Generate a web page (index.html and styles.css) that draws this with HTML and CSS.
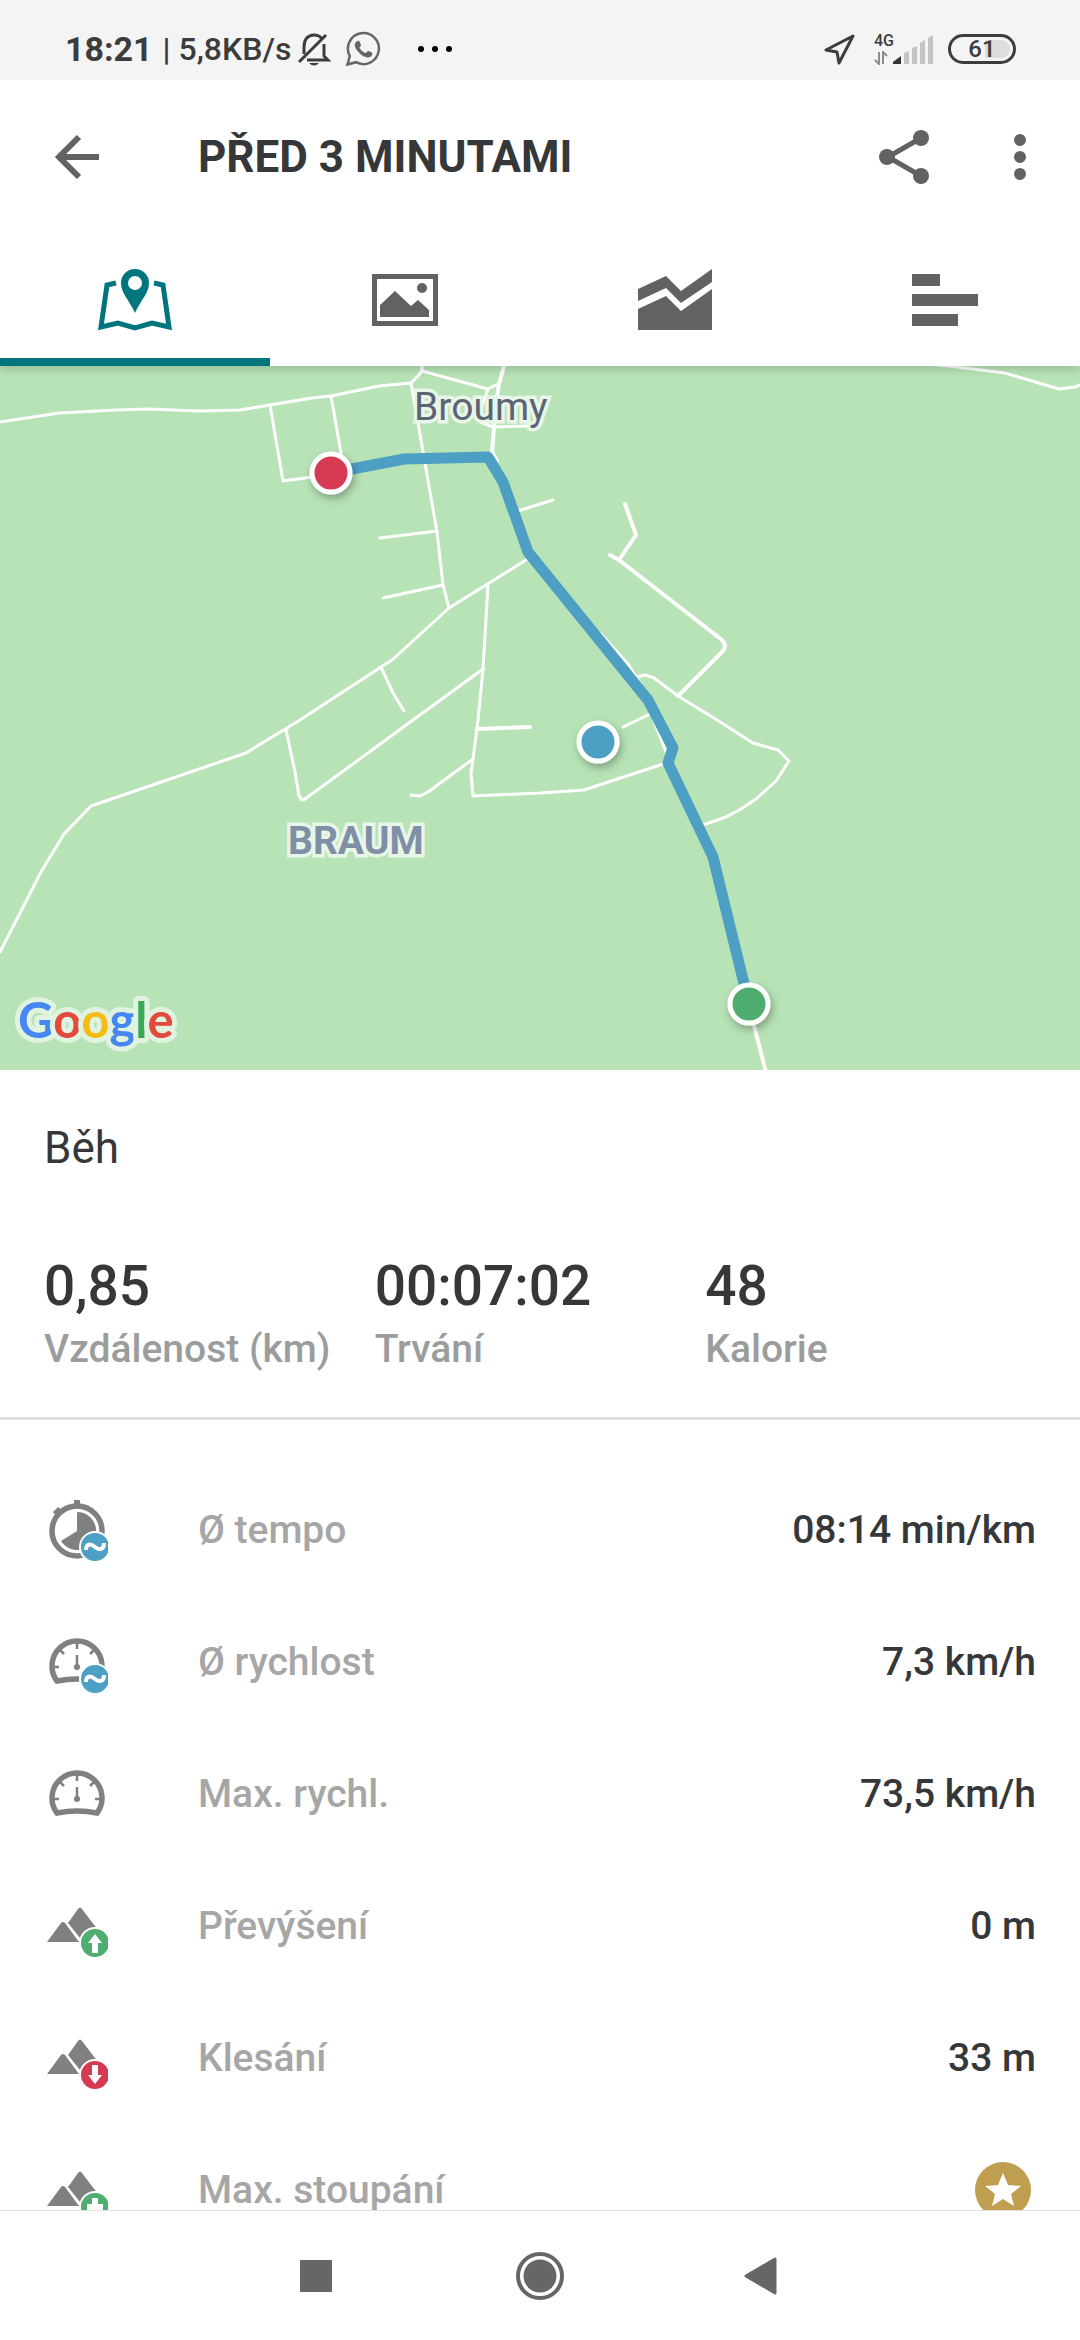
FILE: index.html
```html
<!DOCTYPE html>
<html lang="cs">
<head>
    <meta charset="UTF-8">
    <meta name="viewport" content="width=device-width, initial-scale=1.0">
    <title>Před 3 minutami</title>
    <link rel="stylesheet" href="styles.css">
</head>
<body>
    <div class="status-bar">
        <div class="status-left">
            <span class="clock">18:21</span>
            <span class="net-speed">| 5,8KB/s</span>
            <svg class="bell" width="34" height="34" viewBox="0 0 34 34" fill="none" stroke="#3c3c3c" stroke-width="3">
                <path d="M7 22V15c0-8 4-12 10-12 4 0 6 1 8 4M27 12v12l4 4H10M2 30 29 3"/>
                <path d="M12 31h10q-5 5-10 0z" fill="#3c3c3c" stroke="none"/>
            </svg>
            <svg width="36" height="36" viewBox="0 0 36 36">
                <path d="M2.500 33.500 4.800 25A15.500 15.500 0 1 1 11 31.200z" fill="none" stroke="#666" stroke-width="2.500"/>
                <path d="M11.500 10.500c1-1 2.500-1 3 0l1.500 3.500c0 1-1.500 2-1.500 2.500 1 2.500 3 4.500 6 5.500 1 0 2-2.500 3-2l3.500 1.500c1 1 0 3-1 4-3 2-7 .5-10-2-3-2.500-5-5-6-8-.5-2 0-4 1.500-5z" fill="#666"/>
            </svg>
            <svg class="more-dots" width="36" height="8" viewBox="0 0 36 8">
                <circle cx="4" cy="4" r="3"/><circle cx="18" cy="4" r="3"/><circle cx="32" cy="4" r="3"/>
            </svg>
        </div>
        <div class="status-right">
            <svg width="32" height="32" viewBox="0 0 32 32" fill="none" stroke="#3c3c3c" stroke-width="3" stroke-linejoin="round">
                <path d="M29 3 2 17l11 2 2 11z"/>
            </svg>
            <div class="signal">
                <div class="signal-type">
                    <span>4G</span>
                    <svg width="14" height="14" viewBox="0 0 14 14" stroke="#8c8c8c" stroke-width="2" fill="none">
                        <path d="M5 1v12L1 9M9 13V1l4 4"/>
                    </svg>
                </div>
                <svg width="42" height="32" viewBox="0 0 42 32" fill="#c4c4c4">
                    <path d="M1 31v-2l8-6v8z" fill="#333"/>
                    <path d="M12 31V20l5-2v13zM20 31V15l5-2v18zM28 31V10l5-3v24zM36 31V5l5-3v29z"/>
                </svg>
            </div>
            <div class="battery">61</div>
        </div>
    </div>

    <header class="app-header">
        <div class="toolbar">
            <button class="icon-btn back" aria-label="Zpět">
                <svg width="46" height="46" viewBox="0 0 46 46" fill="none" stroke="#616362" stroke-width="6">
                    <path d="M45 23H5M25 3 5 23l20 20"/>
                </svg>
            </button>
            <h1>PŘED 3 MINUTAMI</h1>
            <button class="icon-btn share" aria-label="Sdílet">
                <svg width="52" height="56" viewBox="0 0 52 56" fill="#616362">
                    <path d="M43 9 10 28l33 19" fill="none" stroke="#616362" stroke-width="5"/>
                    <circle cx="43" cy="9" r="8"/><circle cx="9" cy="28" r="8"/><circle cx="43" cy="47" r="8"/>
                </svg>
            </button>
            <button class="icon-btn menu" aria-label="Další možnosti">
                <svg width="12" height="48" viewBox="0 0 12 48" fill="#616362">
                    <circle cx="6" cy="7" r="6"/><circle cx="6" cy="24" r="6"/><circle cx="6" cy="41" r="6"/>
                </svg>
            </button>
        </div>
        <nav class="tabs">
            <button class="tab active" aria-label="Mapa">
                <svg width="74" height="64" viewBox="0 0 74 64">
                    <path d="M18 15 9 17 3 59l17-4 17 5 17-5 17 4-6-42-9-2" fill="none" stroke="#00757d" stroke-width="5"/>
                    <path d="M37 1a14 14 0 0 0-14 14c0 10 7 15 14 30 7-15 14-20 14-30A14 14 0 0 0 37 1zm0 7a7 7 0 1 1 0 14 7 7 0 0 1 0-14z" fill="#00757d"/>
                </svg>
            </button>
            <button class="tab" aria-label="Fotky">
                <svg width="66" height="52" viewBox="0 0 66 52" fill="#616362">
                    <path d="M0 0h66v52H0zM5 5v42h56V5z" fill-rule="evenodd"/>
                    <path d="M8 43V31l15-14 16 15 7-6 11 10v7z"/>
                    <circle cx="50" cy="14" r="5"/>
                </svg>
            </button>
            <button class="tab" aria-label="Grafy">
                <svg width="74" height="64" viewBox="0 0 74 64" fill="#616362">
                    <path d="M0 21 28 8l15 15L74 1v13L43 35 28 20 0 33z"/>
                    <path d="M0 41 28 28l15 15 31-22v41H0z"/>
                </svg>
            </button>
            <button class="tab" aria-label="Mezičasy">
                <svg width="66" height="52" viewBox="0 0 66 52" fill="#616362">
                    <path d="M0 0h28v12H0zM0 20h66v12H0zM0 40h46v12H0z"/>
                </svg>
            </button>
        </nav>
    </header>

    <main class="content">
        <svg class="map" viewBox="0 0 1080 704" role="img" aria-label="Mapa trasy">
            <defs>
                <filter id="pinShadow" x="-50%" y="-50%" width="200%" height="200%">
                    <feDropShadow dx="2" dy="4" stdDeviation="4" flood-opacity="0.3"/>
                </filter>
            </defs>
            <rect width="1080" height="704" fill="#b7e3b6"/>

            <g class="roads">
                <path d="M0 56 59 47 117 44 148 43 200 45 240 44 270 39 312 32 331 30 379 20 411 17 418 10 422 5V-2"/>
                <path d="M422 5 488 23 498 18M488 23 482 40 480 56 493 61 527 60"/>
                <path d="M411 17 418 57 437 166 443 219 449 242"/>
                <path d="M270 39 283 115 320 110M331 30 341 87M380 172 437 165M383 232 443 219M518 145 553 134"/>
                <path d="M526 194 449 242 392 294 381 301 300 354 246 387 91 440 64 468 41 506 0 586"/>
                <path d="M381 301 393 327 404 345"/>
                <path d="M488 219 483 303 478 354 473 393 471 407 473 430 540 427 584 424 663 398"/>
                <path d="M483 303 413 354 305 433 302 434 299 430 295 406 286 364"/>
                <path d="M473 393 428 426 420 430 411 429"/>
                <path d="M637 311 645 309 654 312 678 330 717 354 753 377 778 384 789 395 776 415 756 433 741 443 726 451 703 459"/>
                <path d="M599 266 628 298 642 320M623 361 650 348M648 340 666 386"/>
                <path d="M930-2 957 1 1005 7 1059 23 1075 21 1082 18"/>
            </g>
            <g class="roads wide">
                <path d="M504 0 499 18 496 37 492 86 497 95M477 363 530 361M753 656 766 706"/>
                <path d="M625 138 636 169 619 194M610 189 619 194 722 274Q728 280 722 286L678 330"/>
            </g>

            <text class="place town" x="414" y="54">Broumy</text>
            <text class="place district" x="288" y="488">BRAUM</text>

            <path class="route" d="M331 107 404 93 488 91 503 116 528 186 648 334 673 382 668 397 713 491 749 638"/>

            <g class="pins" filter="url(#pinShadow)">
                <circle cx="331" cy="107" r="19" fill="#d63a52"/>
                <circle cx="598" cy="376" r="19" fill="#4d9fc4"/>
                <circle cx="749" cy="638" r="19" fill="#50ad70"/>
            </g>

            <text class="brand" x="18" y="672"><tspan fill="#4688f1">G</tspan><tspan fill="#e24a3b">o</tspan><tspan fill="#f6bc13">o</tspan><tspan fill="#4688f1">g</tspan><tspan fill="#3aa757">l</tspan><tspan fill="#e24a3b">e</tspan></text>
        </svg>

        <section class="summary">
            <h2>Běh</h2>
            <dl class="totals">
                <div><dd>0,85</dd><dt>Vzdálenost (km)</dt></div>
                <div><dd>00:07:02</dd><dt>Trvání</dt></div>
                <div><dd>48</dd><dt>Kalorie</dt></div>
            </dl>
        </section>

        <dl class="stats">
            <div class="stat">
                <svg width="64" height="64" viewBox="0 0 64 64" fill="#808080">
                    <circle cx="33" cy="33" r="25" fill="none" stroke="#808080" stroke-width="5.500"/>
                    <path d="M30 2h6v6h-6zM9 14l5-5 4 3-6 6z"/>
                    <path d="M33 33V14a19 19 0 1 1-16 29z"/>
                    <circle cx="51" cy="49" r="16" fill="#fff"/>
                    <circle cx="51" cy="49" r="14" fill="#4d9fc4"/>
                    <path d="M42 52c0-6 4-7 9-3s9 2 9-4" fill="none" stroke="#fff" stroke-width="4"/>
                </svg>
                <dt>Ø tempo</dt>
                <dd>08:14 min/km</dd>
            </div>
            <div class="stat">
                <svg width="64" height="64" viewBox="0 0 64 64" fill="#808080">
                    <path d="M13 51A25 25 0 1 1 53 51Q33 47 13 51z" fill="none" stroke="#808080" stroke-width="5.500"/>
                    <path d="M33 13v6M10 37h5M51 37h5M16 20l4 4M50 20l-4 4M33 25v12" stroke="#808080" stroke-width="2.500"/>
                    <circle cx="33" cy="37" r="3"/>
                    <circle cx="51" cy="49" r="16" fill="#fff"/>
                    <circle cx="51" cy="49" r="14" fill="#4d9fc4"/>
                    <path d="M42 52c0-6 4-7 9-3s9 2 9-4" fill="none" stroke="#fff" stroke-width="4"/>
                </svg>
                <dt>Ø rychlost</dt>
                <dd>7,3 km/h</dd>
            </div>
            <div class="stat">
                <svg width="64" height="64" viewBox="0 0 64 64" fill="#808080">
                    <path d="M13 51A25 25 0 1 1 53 51Q33 47 13 51z" fill="none" stroke="#808080" stroke-width="5.500"/>
                    <path d="M33 13v6M10 37h5M51 37h5M16 20l4 4M50 20l-4 4M33 25v12" stroke="#808080" stroke-width="2.500"/>
                    <circle cx="33" cy="37" r="3"/>
                </svg>
                <dt>Max. rychl.</dt>
                <dd>73,5 km/h</dd>
            </div>
            <div class="stat">
                <svg width="64" height="64" viewBox="0 0 64 64" fill="#808080">
                    <path d="M3 48 17 29q2-2 4 0L35 48zM24 29 34 15q2-3 4 0L54 36 36 44z"/>
                    <circle cx="51" cy="49" r="16" fill="#fff"/>
                    <circle cx="51" cy="49" r="14" fill="#50ad70"/>
                    <path d="M51 40l7 9h-4v10h-6V49h-4z" fill="#fff"/>
                </svg>
                <dt>Převýšení</dt>
                <dd>0 m</dd>
            </div>
            <div class="stat">
                <svg width="64" height="64" viewBox="0 0 64 64" fill="#808080">
                    <path d="M3 48 17 29q2-2 4 0L35 48zM24 29 34 15q2-3 4 0L54 36 36 44z"/>
                    <circle cx="51" cy="49" r="16" fill="#fff"/>
                    <circle cx="51" cy="49" r="14" fill="#d63a52"/>
                    <path d="M51 58l7-9h-4V39h-6v10h-4z" fill="#fff"/>
                </svg>
                <dt>Klesání</dt>
                <dd>33 m</dd>
            </div>
            <div class="stat">
                <svg width="64" height="64" viewBox="0 0 64 64" fill="#808080">
                    <path d="M3 48 17 29q2-2 4 0L35 48zM24 29 34 15q2-3 4 0L54 36 36 44z"/>
                    <circle cx="51" cy="49" r="16" fill="#fff"/>
                    <circle cx="51" cy="49" r="14" fill="#50ad70"/>
                    <path d="M48 40h6v6h5v6h-5v6h-6v-6h-5v-6h5z" fill="#fff"/>
                </svg>
                <dt>Max. stoupání</dt>
                <dd>
                    <svg width="66" height="66" viewBox="0 0 66 66">
                        <circle cx="33" cy="33" r="28" fill="#bf9e4f"/>
                        <path d="M33 16l5 12 13 1-10 8 3 12-11-7-11 7 3-12-10-8 13-1z" fill="#fff"/>
                    </svg>
                </dd>
            </div>
        </dl>
    </main>

    <nav class="system-nav">
        <button aria-label="Poslední aplikace">
            <svg width="48" height="48" viewBox="0 0 48 48" fill="#666"><rect x="8" y="8" width="32" height="32" rx="1"/></svg>
        </button>
        <button aria-label="Domů">
            <svg width="50" height="50" viewBox="0 0 50 50" fill="#666">
                <circle cx="25" cy="25" r="22" fill="none" stroke="#666" stroke-width="4"/>
                <circle cx="25" cy="25" r="16.500"/>
            </svg>
        </button>
        <button aria-label="Zpět">
            <svg width="48" height="48" viewBox="0 0 48 48" fill="#666" stroke="#666" stroke-width="3" stroke-linejoin="round">
                <path d="M35 7v34L6 24z"/>
            </svg>
        </button>
    </nav>
</body>
</html>
```

FILE: styles.css
```css
* {
    box-sizing: border-box;
}
body {
    margin: 0;
    height: 100vh;
    display: flex;
    flex-direction: column;
    font-family: Roboto, sans-serif;
    font-weight: 500;
    color: #353739;
    background: #fff;
}
h1, h2, dl, dt, dd {
    margin: 0;
}
svg {
    display: block;
    flex: none;
}
button {
    display: flex;
    align-items: center;
    justify-content: center;
    padding: 0;
    border: none;
    background: none;
    cursor: pointer;
}

/* status bar */
.status-bar {
    position: relative;
    z-index: 2;
    display: flex;
    justify-content: space-between;
    align-items: center;
    flex: none;
    height: 80px;
    padding: 18px 64px 0 65px;
    background: #f4f4f4;
    color: #3c3c3c;
}
.status-left,
.status-right {
    display: flex;
    align-items: center;
}
.clock {
    font-size: 34px;
    font-weight: 700;
}
.net-speed {
    margin: 0 6px 0 10px;
    font-size: 32px;
}
.bell {
    margin-right: 14px;
}
.more-dots {
    margin-left: 36px;
}
.signal {
    display: flex;
    margin: 0 14px 0 18px;
}
.signal-type {
    display: flex;
    flex-direction: column;
    align-items: flex-start;
    gap: 2px;
    width: 18px;
    font-size: 16px;
    line-height: 16px;
}
.battery {
    width: 68px;
    height: 30px;
    border: 3px solid #3c3c3c;
    border-radius: 15px;
    background: linear-gradient(90deg, transparent 55%, #ddd 55%) content-box;
    padding: 3px;
    font-size: 24px;
    line-height: 18px;
    text-align: center;
}

/* toolbar and tabs */
.app-header {
    position: relative;
    z-index: 1;
    flex: none;
    background: #fff;
    box-shadow: 0 2px 10px rgba(0, 0, 0, 0.2);
}
.toolbar {
    display: flex;
    align-items: center;
    height: 154px;
    padding: 0 54px;
}
.toolbar h1 {
    flex: 1;
    margin-left: 98px;
    font-size: 44px;
    font-weight: 700;
}
.menu {
    margin-left: 84px;
}
.tabs {
    display: grid;
    grid-template-columns: repeat(4, 1fr);
    height: 132px;
}
.tab {
    border-top: 8px solid transparent;
    border-bottom: 8px solid transparent;
}
.tab.active {
    border-bottom-color: #00757d;
}

.content {
    flex: 1;
    min-height: 0;
    overflow-y: auto;
    scrollbar-width: none;
}

/* map */
.map {
    width: 100%;
    height: auto;
}
.roads {
    fill: none;
    stroke: #fff;
    stroke-width: 3;
    stroke-linecap: round;
    stroke-linejoin: round;
}
.roads.wide {
    stroke-width: 4;
}
.route {
    fill: none;
    stroke: #4d9fc4;
    stroke-width: 11;
    stroke-linejoin: round;
}
.pins {
    stroke: #fff;
    stroke-width: 5;
}
.place {
    font-size: 39px;
    stroke: #e8f5e8;
    stroke-width: 7;
    paint-order: stroke;
}
.town {
    font-weight: 400;
    fill: #5b6472;
}
.district {
    font-weight: 700;
    fill: #7f8fa6;
}
.brand {
    font-family: Lato, sans-serif;
    font-size: 49px;
    font-weight: 700;
    stroke: #e0f2e0;
    stroke-width: 10;
    stroke-linejoin: round;
    paint-order: stroke;
}

/* summary */
.summary {
    padding: 52px 44px 44px;
    border-bottom: 3px solid #e0e0e0;
}
.summary h2 {
    font-size: 44px;
    font-weight: 400;
    line-height: 52px;
}
.totals {
    display: grid;
    grid-template-columns: repeat(3, 1fr);
    margin-top: 76px;
}
.totals div {
    display: flex;
    flex-direction: column;
    gap: 3px;
    white-space: nowrap;
}
.totals dd {
    font-size: 55px;
    line-height: 72px;
}
.totals dt {
    font-size: 39px;
    line-height: 48px;
    color: #9b9d9c;
}

/* list of values */
.stats {
    padding: 44px;
}
.stat {
    display: flex;
    align-items: center;
    height: 132px;
    font-size: 39px;
}
.stat dt {
    flex: 1;
    margin-left: 90px;
    color: #a6a6a6;
}

.system-nav {
    display: flex;
    justify-content: center;
    gap: 128px;
    flex: none;
    height: 130px;
    border-top: 1px solid #e0e0e0;
    background: #fff;
}
.system-nav button {
    width: 96px;
}
```
